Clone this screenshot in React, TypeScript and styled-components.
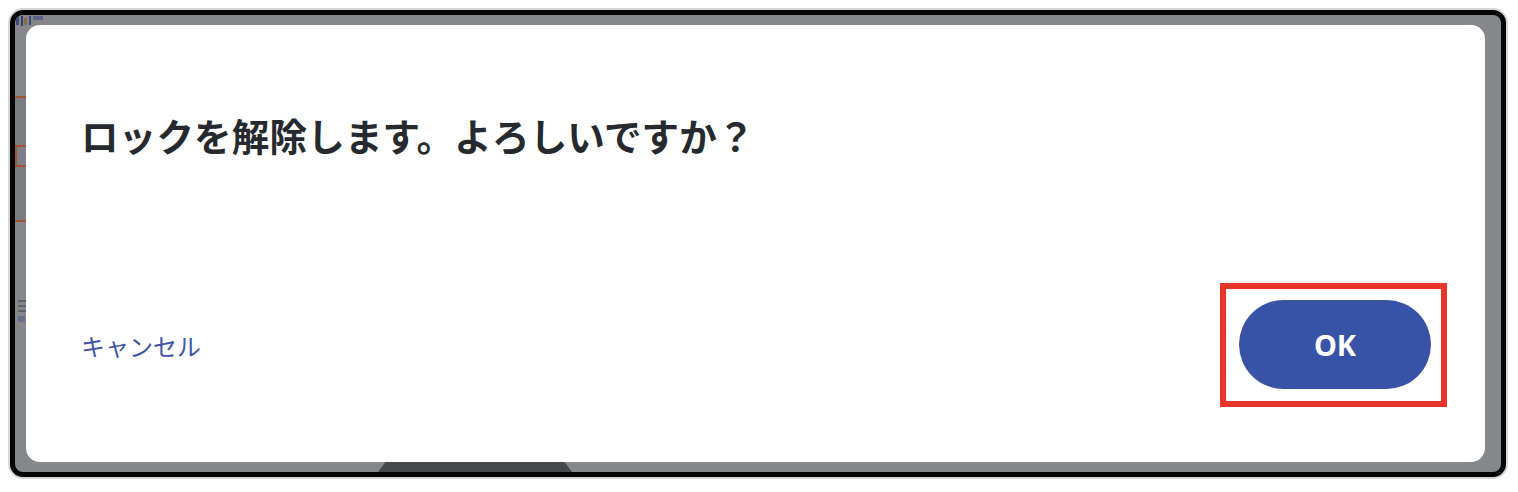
import React from 'react';
import styled, { createGlobalStyle } from 'styled-components';

const GlobalStyle = createGlobalStyle`
  html, body {
    margin: 0;
    padding: 0;
    background: #ffffff;
  }
  body {
    font-family: "Noto Sans CJK JP", "Noto Sans", sans-serif;
  }
`;

const Screen = styled.div`
  padding: 10px 12px 15px 10px;
`;

const Frame = styled.div`
  position: relative;
  box-sizing: border-box;
  width: 1496px;
  height: 467px;
  border: 5px solid #050505;
  border-radius: 13px;
  box-shadow: 0 0 0 2px #d6d6d6;
  background: #85878b;
  padding: 10px 16px 10px 11px;
  display: flex;
  overflow: hidden;
`;

// the page under the dimmed overlay, only its edges show
const Underlay = styled.svg`
  position: absolute;
  inset: 0;
  width: 100%;
  height: 100%;
`;

const Dialog = styled.div`
  position: relative;
  z-index: 1;
  flex: 1;
  background: #ffffff;
  border-radius: 14px;
  display: flex;
  flex-direction: column;
  padding: 0 38px 55px 55px;
`;

const Title = styled.h2`
  margin: 87px 0 0;
  font-family: "Noto Sans CJK JP", "Noto Sans", sans-serif;
  font-weight: 700;
  font-size: 37.5px;
  line-height: 1.2;
  color: #262a2f;
  letter-spacing: 0.2px;
`;

const Actions = styled.div`
  margin-top: auto;
  display: flex;
  align-items: center;
  justify-content: space-between;
`;

const CancelLink = styled.button`
  border: none;
  background: none;
  padding: 0;
  font-family: "Noto Sans CJK JP", "Noto Sans", sans-serif;
  font-size: 24px;
  font-weight: 400;
  color: #3d55a6;
  cursor: pointer;
`;

const Highlight = styled.div`
  border: 6px solid #e8352a;
  padding: 11px 10px 12px 13px;
  display: flex;
`;

const OkButton = styled.button`
  width: 192px;
  height: 89px;
  border: none;
  border-radius: 45px;
  background: #3853a5;
  color: #ffffff;
  font-family: "Noto Sans", "Liberation Sans", sans-serif;
  font-weight: 700;
  font-size: 29px;
  cursor: pointer;
`;

export default function App() {
  return (
    <Screen>
      <GlobalStyle />
      <Frame>
        <Underlay viewBox="0 0 1486 457" preserveAspectRatio="none" aria-hidden>
          <rect x="1" y="1" width="3" height="9" fill="#3b4a78" />
          <rect x="6" y="1" width="2" height="10" fill="#2e3f70" />
          <rect x="9" y="3" width="3" height="7" fill="#8a6a3a" />
          <rect x="14" y="1" width="2" height="9" fill="#3b4a78" />
          <rect x="18" y="1" width="10" height="4" fill="#5a6288" />
          <rect x="0" y="82" width="11" height="124" fill="#7a7c80" />
          <rect x="0" y="81" width="11" height="2" fill="#a5532f" />
          <path d="M11 131 H1 V151 H11" fill="#7d7f8c" stroke="#a5532f" strokeWidth="2" />
          <rect x="0" y="205" width="11" height="2" fill="#a5532f" />
          <g fill="#5d6272">
            <rect x="3" y="285" width="8" height="2" />
            <rect x="3" y="290" width="8" height="2" />
            <rect x="3" y="295" width="8" height="2" />
          </g>
          <rect x="3" y="301" width="7" height="6" fill="#66708a" />
          <polygon points="372,445 548,445 557,457 363,457" fill="#46484b" />
        </Underlay>
        <Dialog role="dialog">
          <Title>ロックを解除します。よろしいですか？</Title>
          <Actions>
            <CancelLink>キャンセル</CancelLink>
            <Highlight>
              <OkButton>OK</OkButton>
            </Highlight>
          </Actions>
        </Dialog>
      </Frame>
    </Screen>
  );
}
